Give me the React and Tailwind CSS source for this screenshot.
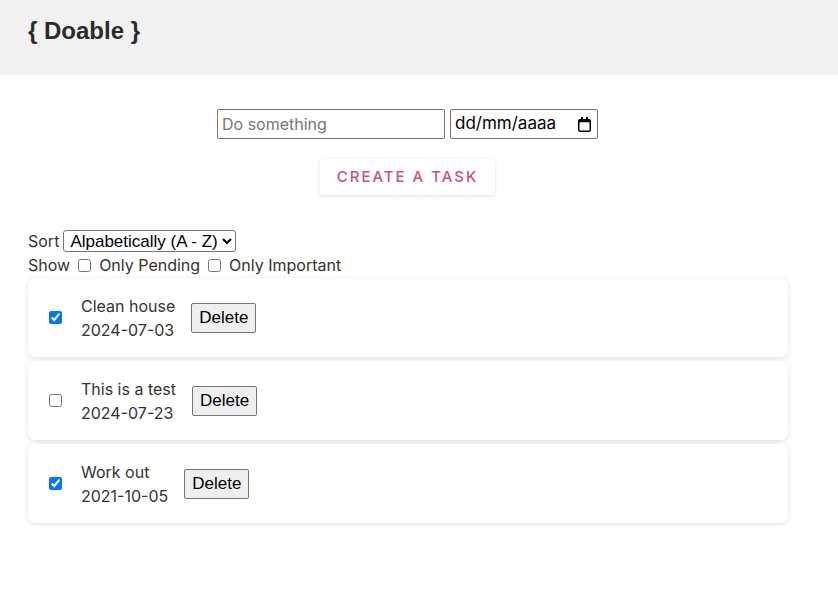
import React, { useState } from 'react';

const initialTasks = [
  { id: 1, title: 'Clean house', date: '2024-07-03', done: true },
  { id: 2, title: 'This is a test', date: '2024-07-23', done: false },
  { id: 3, title: 'Work out', date: '2021-10-05', done: true },
];

const CalendarIcon = () => (
  <svg width="13" height="15" viewBox="0 0 13 15" className="shrink-0">
    <rect x="3" y="0" width="2" height="3" fill="#000" />
    <rect x="8" y="0" width="2" height="3" fill="#000" />
    <rect x="0.75" y="2.75" width="11.5" height="11.5" rx="1.5" fill="none" stroke="#000" strokeWidth="1.5" />
    <rect x="0.75" y="2.75" width="11.5" height="2.5" fill="#000" />
  </svg>
);

const App = () => {
  const [tasks, setTasks] = useState(initialTasks);
  const [text, setText] = useState('');

  const toggle = (id) => {
    setTasks(prev => prev.map(t => (t.id === id ? { ...t, done: !t.done } : t)));
  };

  const remove = (id) => {
    setTasks(prev => prev.filter(t => t.id !== id));
  };

  return (
    <div className="min-h-screen bg-white text-[#333] font-['Inter',sans-serif] text-[16px]">
      <header className="h-[75px] bg-[#f2f2f2] flex items-center px-[28px]">
        <h1 className="font-['Liberation_Sans',Arial,sans-serif] font-bold text-[24px] text-[#2a2a2a] -mt-[13px]">{'{ Doable }'}</h1>
      </header>

      <main className="w-[815px]">
        <div className="flex flex-col items-center mt-[34px]">
          <div className="flex gap-[5px]">
            <input
              type="text"
              value={text}
              onChange={(e) => setText(e.target.value)}
              placeholder="Do something"
              className="w-[228px] h-[30px] border border-[#767676] rounded-[2px] px-[4px] placeholder:text-[#777] text-[16px]"
            />
            <label className="w-[148px] h-[30px] border border-[#767676] rounded-[2px] pl-[4px] pr-[6px] flex items-center text-[17px] text-black">
              <input type="text" placeholder="dd/mm/aaaa" className="w-full min-w-0 outline-none placeholder:text-black" />
              <CalendarIcon />
            </label>
          </div>
          <button className="mt-[20px] w-[175px] h-[36px] rounded-[4px] bg-white shadow-[0_1px_4px_rgba(0,0,0,0.12)] text-[#c9517c] text-[15px] font-medium tracking-[2px] uppercase">
            Create a task
          </button>
        </div>

        <div className="px-[28px] mt-[35px]">
          <div className="flex items-center h-[22px] gap-[4px]">
            <span>Sort</span>
            <select className="h-[22px] border border-[#767676] rounded-[3px] font-['Liberation_Sans',Arial,sans-serif] text-[17px] text-black pl-[2px]">
              <option>Alpabetically (A - Z)</option>
              <option>Alpabetically (Z - A)</option>
              <option>By date</option>
            </select>
          </div>
          <div className="flex items-center h-[26px]">
            <span>Show</span>
            <input type="checkbox" className="ml-[8px] mr-[8px] w-[13px] h-[13px]" />
            <span>Only Pending</span>
            <input type="checkbox" className="ml-[8px] mr-[8px] w-[13px] h-[13px]" />
            <span>Only Important</span>
          </div>

          <div className="flex flex-col gap-[4px] w-[760px]">
            {tasks.map(task => (
              <div
                key={task.id}
                className="h-[79px] rounded-[7px] bg-white shadow-[0_1px_5px_rgba(0,0,0,0.13)] flex items-center pl-[21px]"
              >
                <input
                  type="checkbox"
                  checked={task.done}
                  onChange={() => toggle(task.id)}
                  className="w-[13px] h-[13px] accent-[#0075ff]"
                />
                <div className="ml-[19px] leading-[24px]">
                  <div>{task.title}</div>
                  <div>{task.date}</div>
                </div>
                <button
                  onClick={() => remove(task.id)}
                  className="ml-[16px] h-[30px] px-[7px] border border-[#767676] rounded-[2px] bg-[#efefef] text-black font-['Liberation_Sans',Arial,sans-serif] text-[17px]"
                >
                  Delete
                </button>
              </div>
            ))}
          </div>
        </div>
      </main>
    </div>
  );
};

export default App;
